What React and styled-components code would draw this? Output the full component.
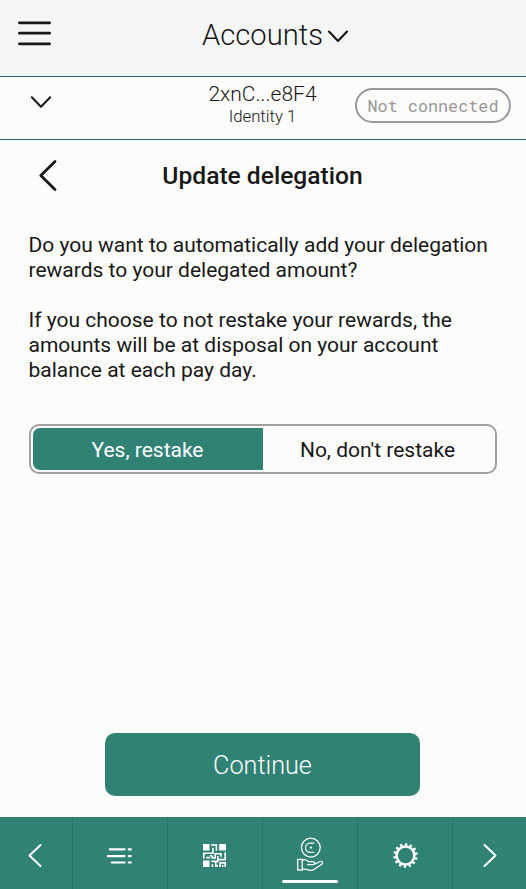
import React from 'react';
import styled, { createGlobalStyle } from 'styled-components';

const GlobalStyle = createGlobalStyle`
  *, *::before, *::after { box-sizing: border-box; }
  html, body { margin: 0; padding: 0; }
  body { font-family: Roboto, 'Liberation Sans', sans-serif; color: #181818; }
  button { font: inherit; color: inherit; border: 0; background: none; padding: 0; margin: 0; }
  svg { display: block; flex: none; }
`;

const Screen = styled.div`
  width: 526px;
  height: 889px;
  display: flex;
  flex-direction: column;
  background: #fcfcfa;
  overflow: hidden;
`;

const Bar = styled.header`
  display: grid;
  grid-template-columns: 171px 1fr 171px;
  height: ${(p) => p.$height}px;
  flex: none;
  background: ${(p) => p.$background || 'transparent'};
  border-bottom: 1px solid #2a5f74;
`;

const MenuButton = styled.button`
  justify-self: start;
  align-self: start;
  margin: 20px 0 0 17px;
`;

const Heading = styled.h1`
  display: flex;
  justify-content: center;
  gap: 4px;
  margin: 0;
  padding: 18px 0 0 25px;
  font-size: 29.2px;
  line-height: 35px;
  font-weight: 300;
  white-space: nowrap;
  svg { margin-top: 11px; }
`;

const ExpandButton = styled.button`
  justify-self: start;
  align-self: start;
  margin: 18px 0 0 30px;
`;

const Account = styled.div`
  text-align: center;
  padding: 5px 1px 0 0;
`;

const Address = styled.div`
  font-size: 21px;
  line-height: 25px;
  font-weight: 300;
`;

const Identity = styled.div`
  font-size: 16.8px;
  line-height: 18px;
  font-weight: 300;
`;

const Status = styled.div`
  width: 156px;
  height: 35px;
  margin-top: 11px;
  border: 2px solid #989898;
  border-radius: 18px;
  color: #989898;
  font: 400 16.8px/31px 'Roboto Mono', 'DejaVu Sans Mono', monospace;
  text-align: center;
  white-space: nowrap;
`;

const TitleRow = styled.div`
  display: grid;
  grid-template-columns: 100px 1fr 100px;
  height: 71px;
  flex: none;
`;

const BackButton = styled.button`
  justify-self: start;
  align-self: start;
  margin: 18px 0 0 38px;
`;

const Title = styled.h2`
  margin: 0;
  padding: 21px 1px 0 0;
  font-size: 24.6px;
  line-height: 29px;
  font-weight: 500;
  text-align: center;
`;

const Content = styled.main`
  flex: 1;
  display: flex;
  flex-direction: column;
  padding: 22px 29px 21px;
`;

const Paragraph = styled.p`
  margin: 0 0 25px -0.5px;
  font-size: 21px;
  line-height: 25px;
  white-space: nowrap;
`;

const Toggle = styled.div`
  display: grid;
  grid-template-columns: 230px 1fr;
  height: 50px;
  margin-top: 16px;
  padding: 2px;
  border: 2px solid #a0a09f;
  border-radius: 10px;
`;

const Option = styled.button`
  padding: 2px 1px 0 0;
  font-size: 21px;
  line-height: 40px;
  color: ${(p) => (p.$active ? '#fff' : '#181818')};
  background: ${(p) => (p.$active ? '#308274' : 'transparent')};
  font-weight: ${(p) => (p.$active ? 450 : 400)};
  border-radius: 7px 0 0 7px;
`;

const ContinueButton = styled.button`
  width: 315px;
  height: 63px;
  margin: auto 0 0 76px;
  padding-top: 2px;
  border-radius: 10px;
  background: #308274;
  color: #fcfcfa;
  font-size: 25.2px;
  font-weight: 300;
`;

const Nav = styled.nav`
  display: grid;
  grid-template-columns: 73px repeat(4, 95px) 1fr;
  height: 72px;
  flex: none;
  background: #308274;
  color: #fff;
`;

const NavItem = styled.button`
  display: flex;
  flex-direction: column;
  align-items: center;
  padding-top: ${(p) => p.$top}px;
  padding-right: ${(p) => p.$right || 0}px;
  color: #fff;
  border-right: 1px solid #297467;
  &:last-child { border-right: 0; }
`;

const ActiveLine = styled.span`
  width: 56px;
  height: 3px;
  border-radius: 2px;
  background: #fcfcfa;
  margin: auto 0 6px;
`;

const Chevron = ({ points, width, height, stroke }) => (
  <svg width={width} height={height} fill="none" stroke="currentColor" strokeWidth={stroke} strokeLinecap="round" strokeLinejoin="round">
    <polyline points={points} />
  </svg>
);

const MenuIcon = () => (
  <svg width="35" height="27" stroke="#181818" strokeWidth="2.8" strokeLinecap="round">
    <path d="M2.4 2.8H32.6M2.4 13.2H32.6M2.4 23.8H32.6" />
  </svg>
);

const ListIcon = () => (
  <svg width="26" height="17" stroke="#fff" strokeWidth="2.1" strokeLinecap="round">
    <path d="M3.8 2.4H18.6M1.8 9.1H18.6M5.8 15.5H18.6M22.7 2.4H24.8M22.7 9.1H24.8M22.7 15.5H24.8" />
  </svg>
);

const QrIcon = () => (
  <svg width="23" height="23" fill="none" stroke="#fff" strokeWidth="1.6">
    <path fill="#fff" stroke="none" d="M0 0H6.5V6.5H0ZM16.2 0H23V6.5H16.2ZM0 16.5H6.5V23H0Z" />
    <path d="M8 1H13.4V6.8M10 3.7V9.3H.8V14.8M3.2 13.6H7M9.2 12V14H12.2V9.7H18V12.8M22.2 8.2V15.6H15.5M14.8 12V17.4H9V18M12.7 18V21.9H15M9.4 20.2V23M17 23V18.9H22.2V23M19.7 21V23M6.8 11.7H9.5" />
  </svg>
);

const StakeIcon = () => (
  <svg width="28" height="36" fill="none" stroke="#fff" strokeWidth="1.25" strokeLinecap="round" strokeLinejoin="round">
    <circle cx="14.8" cy="10.6" r="9.4" />
    <path d="M17.8 6H14.2A4.6 4.6 0 0 0 14.2 15.4H17.8" />
    <circle cx="14.9" cy="10.6" r=".5" />
    <path d="M1.7 22.4H6.2V33.2H1.7ZM6.2 23.7C9 21.2 11 23.5 12.5 24.7H17C19.2 24.7 19 27.7 16.8 27.7H11.5M18.3 27.2L24.2 24.5C26.5 24.2 27.5 26 25.8 27.2L18 32.6C14.8 34.8 11 32.1 6.2 31.8" />
  </svg>
);

const teeth = Array.from({ length: 14 }, (_, i) => i * (360 / 14));

const GearIcon = () => (
  <svg width="25" height="25" viewBox="-12.5 -12.5 25 25" fill="none" stroke="#fff">
    <circle r="8.9" strokeWidth="2.5" />
    {teeth.map((angle) => (
      <path key={angle} d="M0 -9.5V-12.3" strokeWidth="2.4" transform={`rotate(${angle + 3})`} />
    ))}
  </svg>
);

export default function App() {
  return (
    <>
      <GlobalStyle />
      <Screen>
        <Bar $height={77} $background="#f4f6f5">
          <MenuButton aria-label="Menu"><MenuIcon /></MenuButton>
          <Heading>
            Accounts
            <Chevron width="22" height="16" points="2,2.5 11,12 20,2.5" stroke="2.1" />
          </Heading>
        </Bar>
        <Bar $height={63}>
          <ExpandButton aria-label="Expand account">
            <Chevron width="22" height="16" points="1.8,2.3 11,11.8 20.2,2.3" stroke="2" />
          </ExpandButton>
          <Account>
            <Address>2xnC...e8F4</Address>
            <Identity>Identity 1</Identity>
          </Account>
          <Status>Not connected</Status>
        </Bar>
        <TitleRow>
          <BackButton aria-label="Back">
            <Chevron width="20" height="34" points="17,3.5 2.8,17.5 17,31.5" stroke="2.8" />
          </BackButton>
          <Title>Update delegation</Title>
        </TitleRow>
        <Content>
          <Paragraph>
            Do you want to automatically add your delegation<br />
            rewards to your delegated amount?
          </Paragraph>
          <Paragraph>
            If you choose to not restake your rewards, the<br />
            amounts will be at disposal on your account<br />
            balance at each pay day.
          </Paragraph>
          <Toggle>
            <Option $active>Yes, restake</Option>
            <Option>No, don't restake</Option>
          </Toggle>
          <ContinueButton>Continue</ContinueButton>
        </Content>
        <Nav>
          <NavItem $top={26} $right={3} aria-label="Previous">
            <Chevron width="18" height="26" points="14.5,2 3.5,12.5 14.5,23" stroke="2" />
          </NavItem>
          <NavItem $top={30} $right={2} aria-label="Accounts"><ListIcon /></NavItem>
          <NavItem $top={27} $right={1} aria-label="QR code"><QrIcon /></NavItem>
          <NavItem $top={20} aria-label="Delegation">
            <StakeIcon />
            <ActiveLine />
          </NavItem>
          <NavItem $top={26} aria-label="Settings"><GearIcon /></NavItem>
          <NavItem $top={26} aria-label="Next">
            <Chevron width="18" height="26" points="3.5,2 14.5,12.5 3.5,23" stroke="2" />
          </NavItem>
        </Nav>
      </Screen>
    </>
  );
}
